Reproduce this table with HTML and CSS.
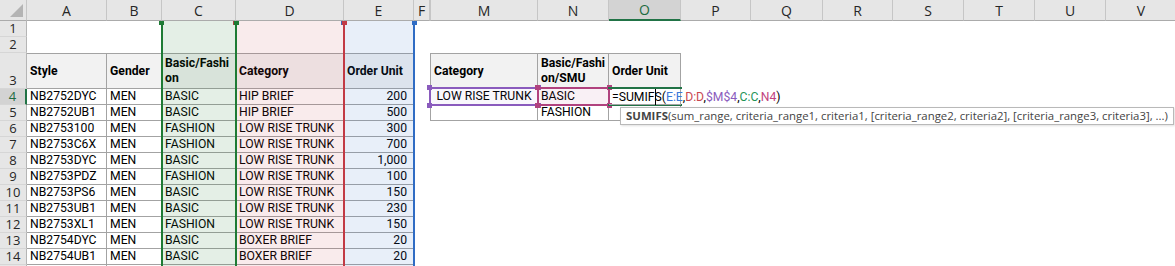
FILE: index.html
```html
<!DOCTYPE html>
<html>
<head>
<meta charset="utf-8">
<title>Sheet</title>
<link rel="stylesheet" href="styles.css">
</head>
<body>
<div class="sheet">
  <div class="ch corner"><svg width="26" height="20" viewBox="0 0 26 20"><polygon points="23,4 23,17 10,17" fill="#b4b4b4"/></svg></div>
  <div class="ch">A</div>
  <div class="ch">B</div>
  <div class="ch">C</div>
  <div class="ch">D</div>
  <div class="ch">E</div>
  <div class="ch">F</div>
  <div class="ch hid">M</div>
  <div class="ch">N</div>
  <div class="ch sel">O</div>
  <div class="ch">P</div>
  <div class="ch">Q</div>
  <div class="ch">R</div>
  <div class="ch">S</div>
  <div class="ch">T</div>
  <div class="ch">U</div>
  <div class="ch">V</div>

  <div class="rh">1</div>
  <div class="rh">2</div>

  <div class="rh">3</div>
  <div class="c hd"><span>Style</span></div>
  <div class="c hd"><span>Gender</span></div>
  <div class="c hd"><span>Basic/Fashi<br>on</span></div>
  <div class="c hd"><span>Category</span></div>
  <div class="c hd"><span>Order Unit</span></div>
  <div class="c hd m"><span>Category</span></div>
  <div class="c hd"><span>Basic/Fashi<br>on/SMU</span></div>
  <div class="c hd"><span>Order Unit</span></div>

  <div class="rh sel">4</div>
  <div class="c">NB2752DYC</div><div class="c">MEN</div><div class="c">BASIC</div><div class="c">HIP BRIEF</div><div class="c num">200</div>
  <div class="c m ctr">LOW RISE TRUNK</div>
  <div class="c">BASIC</div>
  <div class="c fx">=SUMIF<span class="caret"></span>S(<span class="f-e">E:E</span>,<span class="f-d">D:D</span>,<span class="f-m">$M$4</span>,<span class="f-c">C:C</span>,<span class="f-n">N4</span>)</div>

  <div class="rh">5</div>
  <div class="c">NB2752UB1</div><div class="c">MEN</div><div class="c">BASIC</div><div class="c">HIP BRIEF</div><div class="c num">500</div>
  <div class="c m"></div>
  <div class="c">FASHION</div>
  <div class="c"></div>

  <div class="rh">6</div>
  <div class="c">NB2753100</div><div class="c">MEN</div><div class="c">FASHION</div><div class="c">LOW RISE TRUNK</div><div class="c num">300</div>
  <div class="rh">7</div>
  <div class="c">NB2753C6X</div><div class="c">MEN</div><div class="c">FASHION</div><div class="c">LOW RISE TRUNK</div><div class="c num">700</div>
  <div class="rh">8</div>
  <div class="c">NB2753DYC</div><div class="c">MEN</div><div class="c">BASIC</div><div class="c">LOW RISE TRUNK</div><div class="c num">1,000</div>
  <div class="rh">9</div>
  <div class="c">NB2753PDZ</div><div class="c">MEN</div><div class="c">FASHION</div><div class="c">LOW RISE TRUNK</div><div class="c num">100</div>
  <div class="rh">10</div>
  <div class="c">NB2753PS6</div><div class="c">MEN</div><div class="c">BASIC</div><div class="c">LOW RISE TRUNK</div><div class="c num">150</div>
  <div class="rh">11</div>
  <div class="c">NB2753UB1</div><div class="c">MEN</div><div class="c">BASIC</div><div class="c">LOW RISE TRUNK</div><div class="c num">230</div>
  <div class="rh">12</div>
  <div class="c">NB2753XL1</div><div class="c">MEN</div><div class="c">FASHION</div><div class="c">LOW RISE TRUNK</div><div class="c num">150</div>
  <div class="rh">13</div>
  <div class="c">NB2754DYC</div><div class="c">MEN</div><div class="c">BASIC</div><div class="c">BOXER BRIEF</div><div class="c num">20</div>
  <div class="rh">14</div>
  <div class="c">NB2754UB1</div><div class="c">MEN</div><div class="c">BASIC</div><div class="c">BOXER BRIEF</div><div class="c num">20</div>
  <div class="rh">15</div>
  <div class="c"></div><div class="c"></div><div class="c"></div><div class="c"></div><div class="c"></div>

  <div class="rng rng-e"><span class="hdl hl"></span><span class="hdl hr"></span></div>
  <div class="rng rng-d"><span class="hdl hl"></span><span class="hdl hr"></span></div>
  <div class="rng rng-c"><span class="hdl hl"></span><span class="hdl hr"></span></div>

  <div class="box box-m"><span class="hdl tl"></span><span class="hdl tr"></span><span class="hdl bl"></span><span class="hdl br"></span></div>
  <div class="box box-n"><span class="hdl tl"></span><span class="hdl tr"></span><span class="hdl bl"></span><span class="hdl br"></span></div>
  <div class="box box-o"></div>

  <div class="tip"><b>SUMIFS</b>(sum_range, criteria_range1, criteria1, [criteria_range2, criteria2], [criteria_range3, criteria3], ...)</div>
</div>
</body>
</html>
```

FILE: styles.css
```css
* { box-sizing: border-box; }
html, body { margin: 0; padding: 0; background: #fff; }
body { width: 1175px; height: 266px; overflow: hidden; }

.sheet {
  display: grid;
  grid-template-columns: 27px 80px 55px 74px 108px 70px 16px 108px 71px 72px 70px 72px 70px 71px 71px 71px 71px;
  grid-template-rows: 21px 16px 16px 36px repeat(12, 16px);
  position: relative;
  font-family: Roboto, "Liberation Sans", Arial, sans-serif;
  font-size: 12.2px;
  color: #000;
}

/* column headers */
.ch {
  grid-row: 1;
  background: #e6e6e6;
  border-right: 1px solid #c6c6c6;
  border-bottom: 1px solid #ababab;
  font-family: "Open Sans", sans-serif;
  font-size: 14px;
  color: #262626;
  display: flex;
  align-items: center;
  justify-content: center;
}
.ch.corner { display: block; }
.ch.corner svg { display: block; }
.ch.hid { border-left: 1px solid #c6c6c6; }
.ch.sel { background: #d3d3d3; color: #1d6b40; border-bottom: 2px solid #217346; }

/* row headers */
.rh {
  grid-column: 1;
  background: #e6e6e6;
  border-right: 1px solid #b5b5b5;
  border-bottom: 1px solid #d6d6d6;
  font-family: "Open Sans", sans-serif;
  font-size: 13px;
  line-height: 15px;
  color: #262626;
  display: flex;
  align-items: flex-end;
  justify-content: center;
}
.rh.sel { background: #d3d3d3; color: #1d6b40; border-right: 2px solid #217346; }

/* cells */
.c {
  border-right: 1px solid #a3a3a3;
  border-bottom: 1px solid #a3a3a3;
  padding: 0 3px;
  line-height: 15px;
  white-space: nowrap;
  overflow: hidden;
}
.hd {
  border-top: 1px solid #a3a3a3;
  background: #f2f2f2;
  font-weight: bold;
  display: flex;
  align-items: center;
}
.num { text-align: right; padding-right: 6px; }
.m { grid-column: 8; border-left: 1px solid #a3a3a3; }
.ctr { text-align: center; }
.fx { overflow: visible; position: relative; z-index: 8; }

.f-e { color: #3b78d8; }
.f-d { color: #c9474f; }
.f-m { color: #8a5bbd; }
.f-c { color: #1f9357; }
.f-n { color: #c2447f; }

.caret {
  display: inline-block;
  width: 1px;
  height: 16px;
  background: #000;
  vertical-align: -4px;
  margin-right: -1px;
}

/* range finder overlays */
.rng {
  position: absolute;
  grid-row: 2 / 17;
  top: 0;
  bottom: 0;
  left: -1px;
  right: -1px;
  border-left: 2px solid;
  border-right: 2px solid;
  pointer-events: none;
}
.rng-e { grid-column: 6 / 7; color: #2f6cc4; background: rgba(47, 108, 196, 0.11); z-index: 1; }
.rng-d { grid-column: 5 / 6; color: #c23a45; background: rgba(194, 58, 69, 0.10); z-index: 2; }
.rng-c { grid-column: 4 / 5; color: #1e7b34; background: rgba(30, 123, 52, 0.12); z-index: 3; }

.hdl { position: absolute; width: 5px; height: 5px; background: currentColor; }
.rng .hdl { top: 0; height: 4px; }
.rng .hl { left: -4px; }
.rng .hr { right: -4px; }

.box {
  position: absolute;
  top: -2px;
  left: -1px;
  right: -1px;
  bottom: -1px;
  border: 2px solid;
  pointer-events: none;
  z-index: 6;
}
.box-m { grid-column: 8 / 9; grid-row: 5 / 6; color: #8a5bbd; background: rgba(138, 91, 189, 0.05); }
.box-n { grid-column: 9 / 10; grid-row: 5 / 6; color: #b0427e; background: rgba(176, 66, 126, 0.08); }
.box-o { grid-column: 10 / 11; grid-row: 5 / 6; color: #217346; border-left: 0; border-right: 0; }
.box .tl { top: -4px; left: -4px; }
.box .tr { top: -4px; right: -4px; }
.box .bl { bottom: -4px; left: -4px; }
.box .br { bottom: -4px; right: -4px; }

/* function tooltip */
.tip {
  position: absolute;
  grid-column: 10 / 18;
  grid-row: 6 / 7;
  top: 2px;
  left: 11px;
  height: 18px;
  padding: 0 5px;
  border: 1px solid #b9b9b9;
  background: #fff;
  box-shadow: 1px 1px 2px rgba(0, 0, 0, 0.12);
  font-family: "Open Sans", sans-serif;
  font-size: 11.4px;
  line-height: 16px;
  color: #444;
  white-space: nowrap;
  z-index: 10;
}
```
